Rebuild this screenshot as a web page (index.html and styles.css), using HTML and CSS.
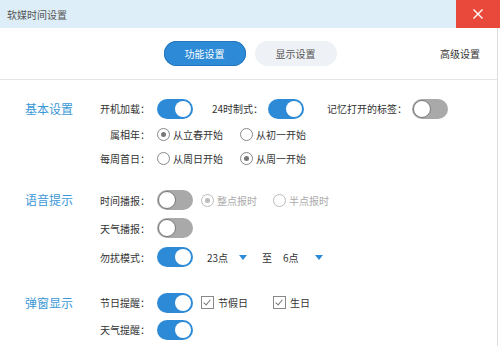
FILE: index.html
```html
<!DOCTYPE html>
<html lang="zh-CN">
<head>
    <meta charset="UTF-8">
    <title>软媒时间设置</title>
    <link rel="stylesheet" href="styles.css">
</head>
<body>
    <div class="titlebar">
        <span class="title">软媒时间设置</span>
        <button class="close" aria-label="关闭">
            <svg width="10" height="10" viewBox="0 0 10 10"><path d="M0.5 0.5 L9.5 9.5 M9.5 0.5 L0.5 9.5" stroke="#fff" stroke-width="1.4" fill="none"/></svg>
        </button>
    </div>

    <div class="window">
        <div class="tabs">
            <span></span>
            <div class="tab-group">
                <span class="tab active">功能设置</span>
                <span class="tab">显示设置</span>
            </div>
            <span class="advanced">高级设置</span>
        </div>

        <div class="content">
            <!-- 基本设置 -->
            <div class="group first">
                <div class="group-title">基本设置</div>
                <div class="rows">
                    <div class="row tall">
                        <span class="field">开机加载：</span>
                        <span class="switch on"><i></i></span>
                        <span class="label gap-a">24时制式：</span>
                        <span class="switch on"><i></i></span>
                        <span class="label gap-b">记忆打开的标签：</span>
                        <span class="switch"><i></i></span>
                    </div>
                    <div class="row">
                        <span class="field">属相年：</span>
                        <span class="option wide"><span class="radio checked"></span>从立春开始</span>
                        <span class="option wide"><span class="radio"></span>从初一开始</span>
                    </div>
                    <div class="row">
                        <span class="field">每周首日：</span>
                        <span class="option wide"><span class="radio"></span>从周日开始</span>
                        <span class="option wide"><span class="radio checked"></span>从周一开始</span>
                    </div>
                </div>
            </div>

            <!-- 语音提示 -->
            <div class="group second">
                <div class="group-title">语音提示</div>
                <div class="rows">
                    <div class="row tall">
                        <span class="field">时间播报：</span>
                        <span class="switch"><i></i></span>
                        <span class="option narrow disabled after-switch"><span class="radio checked"></span>整点报时</span>
                        <span class="option narrow disabled"><span class="radio"></span>半点报时</span>
                    </div>
                    <div class="row tall">
                        <span class="field">天气播报：</span>
                        <span class="switch"><i></i></span>
                    </div>
                    <div class="row tall last">
                        <span class="field">勿扰模式：</span>
                        <span class="switch on"><i></i></span>
                        <span class="select first-select">23点<b class="arrow"></b></span>
                        <span class="to">至</span>
                        <span class="select">6点<b class="arrow"></b></span>
                    </div>
                </div>
            </div>

            <!-- 弹窗显示 -->
            <div class="group third">
                <div class="group-title">弹窗显示</div>
                <div class="rows">
                    <div class="row tall">
                        <span class="field">节日提醒：</span>
                        <span class="switch on"><i></i></span>
                        <span class="option narrow after-switch"><span class="check"></span>节假日</span>
                        <span class="option narrow"><span class="check"></span>生日</span>
                    </div>
                    <div class="row tall">
                        <span class="field">天气提醒：</span>
                        <span class="switch on"><i></i></span>
                    </div>
                </div>
            </div>
        </div>
    </div>
</body>
</html>
```

FILE: styles.css
```css
body {
    margin: 0;
    font-family: "Noto Sans CJK SC", "Microsoft YaHei", sans-serif;
    font-size: 10px;
    color: #333;
    background-color: #fff;
    overflow: hidden;
}

/* 标题栏 */
.titlebar {
    height: 28px;
    background-color: #ddeef8;
    display: flex;
    align-items: center;
    justify-content: space-between;
}
.title {
    padding-left: 7px;
    font-size: 10px;
    color: #555;
}
.close {
    width: 44px;
    height: 28px;
    border: none;
    padding: 0;
    background-color: #e8493b;
    display: flex;
    align-items: center;
    justify-content: center;
}

.window {
    width: 497px;
    height: 318px;
    border-right: 1px solid #dedede;
}

/* 标签页 */
.tabs {
    height: 51px;
    border-bottom: 1px solid #e4e4e4;
    display: grid;
    grid-template-columns: 1fr auto 1fr;
    align-items: center;
    padding: 0 17px 0 20px;
}
.tab-group {
    display: flex;
    gap: 9px;
}
.tab {
    width: 82px;
    height: 25px;
    line-height: 25px;
    text-align: center;
    border-radius: 13px;
    background-color: #eef2f6;
    color: #555;
}
.tab.active {
    background-color: #2d8ad6;
    box-shadow: inset 0 0 0 1px #2576bd;
    color: #fff;
}
.advanced {
    justify-self: end;
    color: #333;
}

/* 分组 */
.content {
    padding-top: 15px;
}
.group {
    display: grid;
    grid-template-columns: 72px 1fr;
    padding-left: 25px;
}
.second {
    margin-top: 16px;
}
.third {
    margin-top: 17px;
}
.group-title {
    height: 27px;
    line-height: 27px;
    font-size: 12px;
    color: #3b98d6;
}

.row {
    height: 24px;
    display: flex;
    align-items: center;
}
.row.tall {
    height: 27px;
}
.second .row.tall {
    height: 28px;
}
.second .row.last {
    height: 30px;
}
.field {
    width: 53px;
    text-align: right;
    margin-right: 7px;
    white-space: nowrap;
}
.label {
    margin-right: 5px;
    white-space: nowrap;
}
.gap-a {
    margin-left: 19px;
}
.gap-b {
    margin-left: 23px;
}

/* 开关 */
.switch {
    width: 36px;
    height: 20px;
    border-radius: 10px;
    background-color: #a9a9a9;
    display: flex;
    align-items: center;
    padding: 0 1px;
    box-sizing: border-box;
}
.switch i {
    width: 18px;
    height: 18px;
    border-radius: 50%;
    background-color: #fff;
    box-sizing: border-box;
    border: 1.5px solid #777;
}
.switch.on {
    background-color: #2d8ad6;
    justify-content: flex-end;
    padding: 0 2px;
}
.switch.on i {
    width: 16px;
    height: 16px;
    border: none;
}

/* 单选和复选 */
.option {
    display: flex;
    align-items: center;
    white-space: nowrap;
}
.option.wide {
    width: 83px;
}
.option.narrow {
    width: 72px;
}
.after-switch {
    margin-left: 8px;
}
.option.disabled {
    color: #aaa;
}
.radio {
    width: 13px;
    height: 13px;
    border: 1px solid #888;
    border-radius: 50%;
    box-sizing: border-box;
    margin-right: 3px;
    display: flex;
    align-items: center;
    justify-content: center;
}
.radio.checked::after {
    content: "";
    width: 5px;
    height: 5px;
    border-radius: 50%;
    background-color: #777;
}
.disabled .radio {
    border-color: #bbb;
}
.disabled .radio.checked::after {
    background-color: #bbb;
}
.check {
    width: 13px;
    height: 13px;
    border: 1px solid #888;
    box-sizing: border-box;
    margin-right: 4px;
    position: relative;
}
.check::after {
    content: "";
    position: absolute;
    left: 3px;
    top: 1px;
    width: 3px;
    height: 6px;
    border-right: 1.5px solid #777;
    border-bottom: 1.5px solid #777;
    transform: rotate(40deg);
}

/* 下拉 */
.select {
    width: 40px;
    display: flex;
    align-items: center;
    justify-content: space-between;
}
.first-select {
    margin-left: 14px;
}
.arrow {
    width: 0;
    height: 0;
    border-left: 4px solid transparent;
    border-right: 4px solid transparent;
    border-top: 5px solid #2d8ad6;
}
.to {
    margin: 0 11px 0 15px;
}
```
